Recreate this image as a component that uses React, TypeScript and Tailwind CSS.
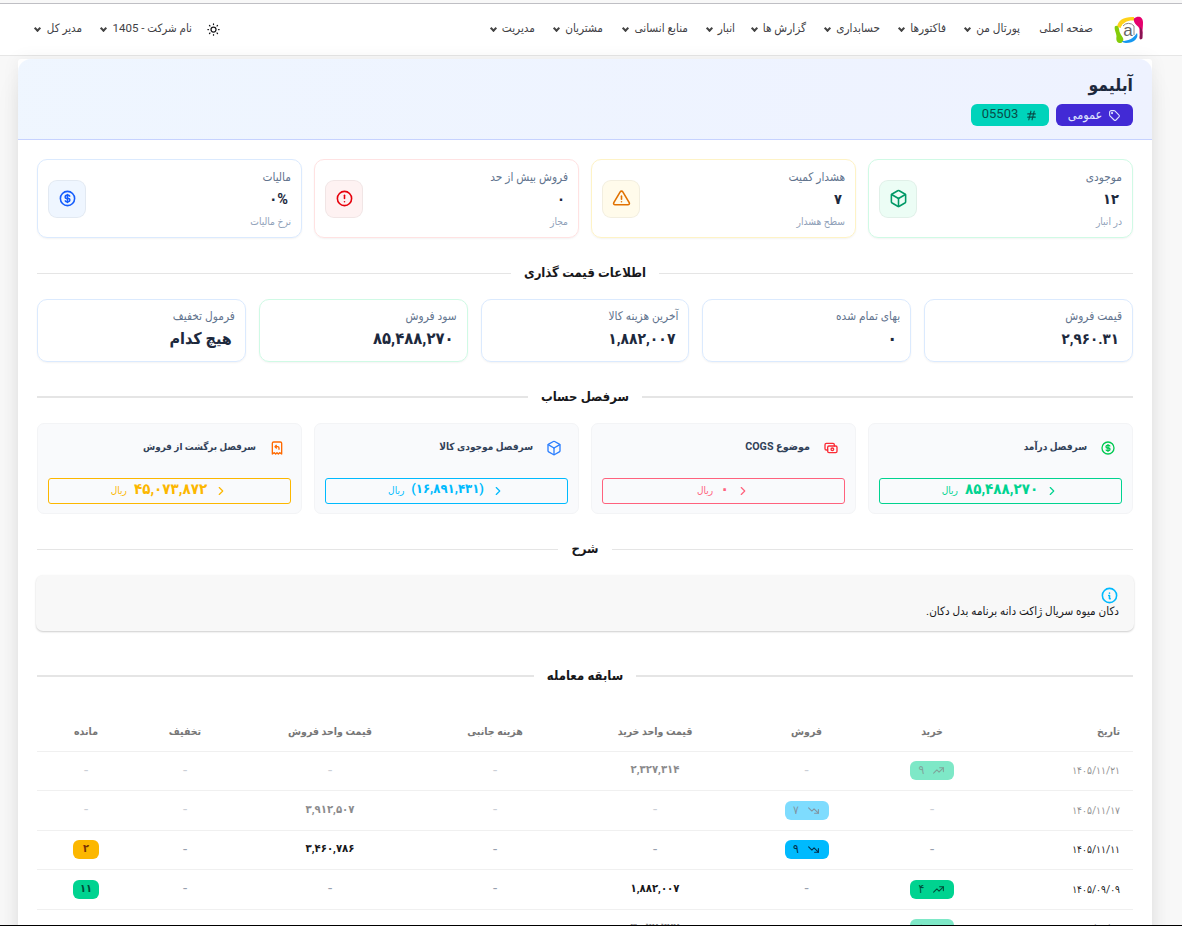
import React from 'react';
import {
    TbCube, TbAlertTriangle, TbAlertCircle, TbCoin, TbCash, TbReceiptRefund,
    TbInfoCircle, TbTag, TbHash, TbSun, TbTrendingUp, TbTrendingDown, TbChevronRight,
} from 'react-icons/tb';

const menu = [
    { label: 'صفحه اصلی', width: 'w-[73px]', arrow: false },
    { label: 'پورتال من', width: 'w-[74px]', arrow: true },
    { label: 'فاکتورها', width: 'w-[66px]', arrow: true },
    { label: 'حسابداری', width: 'w-[74px]', arrow: true },
    { label: 'گزارش ها', width: 'w-[71px]', arrow: true },
    { label: 'انبار', width: 'w-[47px]', arrow: true },
    { label: 'منابع انسانی', width: 'w-[85px]', arrow: true },
    { label: 'مشتریان', width: 'w-[68px]', arrow: true },
    { label: 'مدیریت', width: 'w-[47px]', arrow: true },
];

const stats = [
    { label: 'موجودی', value: '۱۲', note: 'در انبار', icon: TbCube, border: 'border-emerald-100', box: 'bg-emerald-50 text-emerald-600' },
    { label: 'هشدار کمیت', value: '۷', note: 'سطح هشدار', icon: TbAlertTriangle, border: 'border-amber-100', box: 'bg-amber-50 text-amber-600' },
    { label: 'فروش بیش از حد', value: '۰', note: 'مجاز', icon: TbAlertCircle, border: 'border-red-100', box: 'bg-red-50 text-red-600' },
    { label: 'مالیات', value: '۰%', note: 'نرخ مالیات', icon: TbCoin, border: 'border-blue-100', box: 'bg-blue-50 text-blue-600' },
];

const prices = [
    { label: 'قیمت فروش', value: '۲,۹۶۰.۳۱', border: 'border-blue-100', size: 'text-[15px]' },
    { label: 'بهای تمام شده', value: '۰', border: 'border-blue-100', size: 'text-[18px]' },
    { label: 'آخرین هزینه کالا', value: '۱,۸۸۲,۰۰۷', border: 'border-blue-100', size: 'text-[15.5px]' },
    { label: 'سود فروش', value: '۸۵,۴۸۸,۲۷۰', border: 'border-emerald-100', size: 'text-[16.5px]' },
    { label: 'فرمول تخفیف', value: 'هیچ کدام', border: 'border-blue-100', size: 'text-[16px]' },
];

const accounts = [
    { label: 'سرفصل درآمد', value: '۸۵,۴۸۸,۲۷۰', icon: TbCoin, iconColor: 'text-green-500', button: 'border-[#00d390] text-[#00d390]', size: 'text-[15px]', labelSize: 'text-[10px]' },
    { label: 'موضوع COGS', value: '۰', icon: TbCash, iconColor: 'text-red-500', button: 'border-[#ff627d] text-[#ff627d]', size: 'text-[16px]', labelSize: 'text-[10.7px]' },
    { label: 'سرفصل موجودی کالا', value: '(۱۶,۸۹۱,۴۳۱)', icon: TbCube, iconColor: 'text-blue-500', button: 'border-[#00bafe] text-[#00bafe]', size: 'text-[13px]', labelSize: 'text-[10px]' },
    { label: 'سرفصل برگشت از فروش', value: '۴۵,۰۷۳,۸۷۲', icon: TbReceiptRefund, iconColor: 'text-orange-500', button: 'border-[#fcb700] text-[#fcb700]', size: 'text-[15px]', labelSize: 'text-[9.8px]' },
];

const columns = [
    { label: 'تاریخ', width: 'w-[137px]' },
    { label: 'خرید', width: 'w-[128px]' },
    { label: 'فروش', width: 'w-[123px]' },
    { label: 'قیمت واحد خرید', width: 'w-[180px]' },
    { label: 'هزینه جانبی', width: 'w-[140px]' },
    { label: 'قیمت واحد فروش', width: 'w-[190px]' },
    { label: 'تخفیف', width: 'w-[100px]' },
    { label: 'مانده', width: 'w-[98px]' },
];

type Row = { date: string; buy?: string; sell?: string; buyPrice?: string; sellPrice?: string; rest?: string; restColor?: string; faded?: boolean };

const rows: Row[] = [
    { date: '۱۴۰۵/۱۱/۲۱', buy: '۹', buyPrice: '۲,۳۲۷,۳۱۴', faded: true },
    { date: '۱۴۰۵/۱۱/۱۷', sell: '۷', sellPrice: '۳,۹۱۲,۵۰۷', faded: true },
    { date: '۱۴۰۵/۱۱/۱۱', sell: '۹', sellPrice: '۳,۴۶۰,۷۸۶', rest: '۲', restColor: 'bg-[#fcb700] text-[#793205]' },
    { date: '۱۴۰۵/۰۹/۰۹', buy: '۴', buyPrice: '۱,۸۸۲,۰۰۷', rest: '۱۱', restColor: 'bg-[#00d390] text-[#004c39]' },
    { date: '۱۴۰۵/۰۸/۲۴', buy: '۸', buyPrice: '۳,۰۴۷,۴۷۷', faded: true },
];

const Arrow = () => <span className="mb-px h-[5px] w-[5px] shrink-0 rotate-45 border-r-2 border-b-2 border-[#444]" />;

const Logo = () => (
    <svg width="30" height="28" viewBox="0 0 30 28" className="shrink-0">
        <path d="M3 11C4 4 10 .5 20 1l.5 3.5C13 4 9 6.500 7 12Z" fill="#ffd21a" />
        <path d="M.8 10.500c1.700-2 4 0 4.200 2.500.3 4 2.500 6 4 9 1 3-.5 5-3.500 5-3-.5-3.500-3.500-3-6.500C2.500 17 0 14 .8 10.500Z" fill="#84cc0a" />
        <path d="M8 25c6 0 11-2 15-8 2 5-3 10-11 10-2 0-3.500-1-4-2Z" fill="#1597f0" />
        <path d="M20 2.500c4-3.500 9-2 9 4 0 4-.6 8-.6 11L26 19c-1-4 .5-6-2-8.500-2-2-5-4.500-4-8Z" fill="#e5006d" />
        <path d="M26 11c2.500 2 3 6 2.500 11-1 2.500-3.500 1.500-3-1 .4-3 .8-6 .5-10Z" fill="#8a1253" />
        <circle cx="14.500" cy="14" r="8" fill="#fff" />
        <path d="M9 10a7 7 0 0 1 11 0v9" fill="none" stroke="#888" />
        <text x="14" y="19.500" textAnchor="middle" fontSize="17" fill="#666" fontFamily="Liberation Sans, sans-serif">a</text>
    </svg>
);

const Divider = ({ title, line }: { title: string; line: string }) => (
    <div className="flex h-5 items-center gap-[13px]">
        <span className={`flex-1 bg-[#e5e5e5] ${line}`} />
        <h2 className="pb-px text-[13px] leading-5 font-bold whitespace-nowrap text-[#18181b]">{title}</h2>
        <span className={`flex-1 bg-[#e5e5e5] ${line}`} />
    </div>
);

const Dash = () => <span className="text-[15px] leading-4 text-gray-400">-</span>;

const Trend = ({ value, up }: { value: string; up: boolean }) => (
    <span className={`inline-flex h-[19px] w-[44px] items-center justify-center gap-[8px] rounded-[6px] align-middle text-[12px] ${up ? 'bg-[#00d390] text-[#004c39]' : 'bg-[#00bafe] text-[#042e49]'}`}>
        {up ? <TbTrendingUp size={13} /> : <TbTrendingDown size={13} />}
        <span className="pb-px">{value}</span>
    </span>
);

export default function App() {
    return (
        <div dir="rtl" className="flex h-[926px] flex-col overflow-hidden border-b border-black bg-[#f8f8f8] pt-[3px] font-[Roboto,'DejaVu_Sans_Condensed','DejaVu_Sans',sans-serif] text-[#18181b]">
            <header className="flex h-[53px] shrink-0 items-center justify-between border-t border-b border-t-[#bfbfc4] border-b-[#e6e6e6] bg-white pr-[38px] pl-[34px]">
                <nav className="flex items-center">
                    <Logo />
                    <ul className="mr-[21px] flex pb-px text-[11.7px] text-[#3f3f46]">
                        {menu.map((item) => (
                            <li key={item.label} className={`flex items-center gap-[6px] whitespace-nowrap ${item.width}`}>
                                {item.label}
                                {item.arrow && <Arrow />}
                            </li>
                        ))}
                    </ul>
                </nav>
                <div className="flex items-center pb-px text-[11.5px] whitespace-nowrap text-[#3f3f46]">
                    <TbSun size={15} className="ml-[14px] text-[#18181b]" />
                    <span className="flex w-[110px] items-center gap-[7px]">نام شرکت - 1405<Arrow /></span>
                    <span className="flex w-[48px] items-center gap-[7px]">مدیر کل<Arrow /></span>
                </div>
            </header>

            <main className="mt-[3px] mr-[30px] w-[1134px] flex-1 rounded-t-[3px] bg-white shadow-[0_20px_25px_-5px_rgba(0,0,0,0.1),0_0_18px_rgba(0,0,0,0.06)]">
                <div className="h-[81px] rounded-t-[13px] border-b border-indigo-200 bg-gradient-to-r from-blue-50 to-indigo-50 px-[19px] pt-[13px]">
                    <h1 className="h-6 text-[17.5px] leading-[26px] font-bold text-slate-800">آبلیمو</h1>
                    <div className="mt-2 flex gap-[7px]">
                        <span className="flex h-[22px] w-[77px] items-center justify-center gap-[6px] rounded-[6px] bg-[#422ad5] text-[12.5px] text-[#e0e7ff]">
                            <TbTag size={13} />
                            عمومی
                        </span>
                        <span className="flex h-[22px] w-[78px] items-center justify-center gap-[7px] rounded-[6px] bg-[#00d3bb] text-[13px] text-[#084d49]">
                            <TbHash size={13} />
                            <span className="pb-0.5">05503</span>
                        </span>
                    </div>
                </div>

                <div className="px-[19px] pt-[19px]">
                    <div className="grid grid-cols-4 gap-3">
                        {stats.map(({ icon: Icon, ...s }) => (
                            <div key={s.label} className={`flex h-[79px] items-center justify-between rounded-[10px] border px-[10px] shadow-xs ${s.border}`}>
                                <div className="pt-px">
                                    <div className="text-[11.8px] leading-4 text-slate-500">{s.label}</div>
                                    <div className="mt-1 px-[3px] text-[14.500px] leading-[21px] font-bold text-slate-800">{s.value}</div>
                                    <div className="mt-1 text-[10.2px] leading-4 text-slate-400">{s.note}</div>
                                </div>
                                <span className={`flex h-[38px] w-[38px] items-center justify-center rounded-[9px] border border-black/5 ${s.box}`}>
                                    <Icon size={19} />
                                </span>
                            </div>
                        ))}
                    </div>

                    <div className="mt-[25px]">
                        <Divider title="اطلاعات قیمت گذاری" line="h-px" />
                    </div>

                    <div className="mt-4 grid grid-cols-5 gap-[13px]">
                        {prices.map((p) => (
                            <div key={p.label} className={`h-[63px] rounded-[10px] border px-[10px] pt-2 shadow-xs ${p.border}`}>
                                <div className="text-[11.8px] leading-4 text-slate-500">{p.label}</div>
                                <div className={`mt-[3px] px-[3px] leading-6 font-bold text-slate-800 ${p.size}`}>{p.value}</div>
                            </div>
                        ))}
                    </div>

                    <div className="mt-[25px]">
                        <Divider title="سرفصل حساب" line="h-0.5" />
                    </div>

                    <div className="mt-4 grid grid-cols-4 gap-3">
                        {accounts.map(({ icon: Icon, ...a }) => (
                            <div key={a.label} className="h-[91px] rounded-[7px] border border-gray-100 bg-[#f9fafc] px-[10px] pt-[15px]">
                                <div className="flex h-4 items-center gap-[13px] px-[6px]">
                                    <Icon size={16} className={`mt-0.5 ${a.iconColor}`} />
                                    <span className={`leading-4 font-bold text-slate-700 ${a.labelSize}`}>{a.label}</span>
                                </div>
                                <div className={`mt-[23px] flex h-[26px] items-center justify-center gap-[7px] rounded-[3px] border pb-px ${a.button}`}>
                                    <TbChevronRight size={14} />
                                    <span className={`pb-[3px] leading-5 font-bold ${a.size}`}>{a.value}</span>
                                    <span className="text-[10px]">ریال</span>
                                </div>
                            </div>
                        ))}
                    </div>

                    <div className="mt-[25px]">
                        <Divider title="شرح" line="h-px" />
                    </div>

                    <div className="-mx-px mt-4 h-[56px] rounded-[7px] bg-[#f8f8f8] px-[15px] pt-[11px] shadow-[0_1px_2px_rgba(0,0,0,0.2)]">
                        <TbInfoCircle size={19} className="text-[#00bafe]" />
                        <p className="-mt-0.5 text-[11.6px] leading-4">دکان میوه سریال ژاکت دانه برنامه بدل دکان.</p>
                    </div>

                    <div className="mt-[35px]">
                        <Divider title="سابقه معامله" line="h-0.5" />
                    </div>

                    <table className="mt-[26px] w-full table-fixed border-collapse text-[11px]">
                        <thead>
                            <tr className="h-[39px] border-b border-[#f0f0f0] text-[10.5px] text-[#777]">
                                {columns.map((c, i) => (
                                    <th key={c.label} className={`pt-0.5 font-bold ${i === 0 ? 'pr-[13px] text-right' : 'text-center'} ${c.width}`}>{c.label}</th>
                                ))}
                            </tr>
                        </thead>
                        <tbody>
                            {rows.map((r) => (
                                <tr key={r.date} className={`h-[39.5px] border-b border-[#f0f0f0] text-center ${r.faded ? 'opacity-50' : ''}`}>
                                    <td className="pr-[13px] text-right text-[10.2px] whitespace-nowrap">{r.date}</td>
                                    <td>{r.buy ? <Trend value={r.buy} up /> : <Dash />}</td>
                                    <td>{r.sell ? <Trend value={r.sell} up={false} /> : <Dash />}</td>
                                    <td>{r.buyPrice ? <span className="text-[11.3px] font-bold">{r.buyPrice}</span> : <Dash />}</td>
                                    <td><Dash /></td>
                                    <td>{r.sellPrice ? <span className="text-[11.3px] font-bold">{r.sellPrice}</span> : <Dash />}</td>
                                    <td><Dash /></td>
                                    <td>
                                        {r.rest ? (
                                            <span className={`inline-flex h-[19px] w-[26px] items-center justify-center rounded-[6px] pb-px align-middle text-[11px] font-bold ${r.restColor}`}>{r.rest}</span>
                                        ) : <Dash />}
                                    </td>
                                </tr>
                            ))}
                        </tbody>
                    </table>
                </div>
            </main>
        </div>
    );
}
